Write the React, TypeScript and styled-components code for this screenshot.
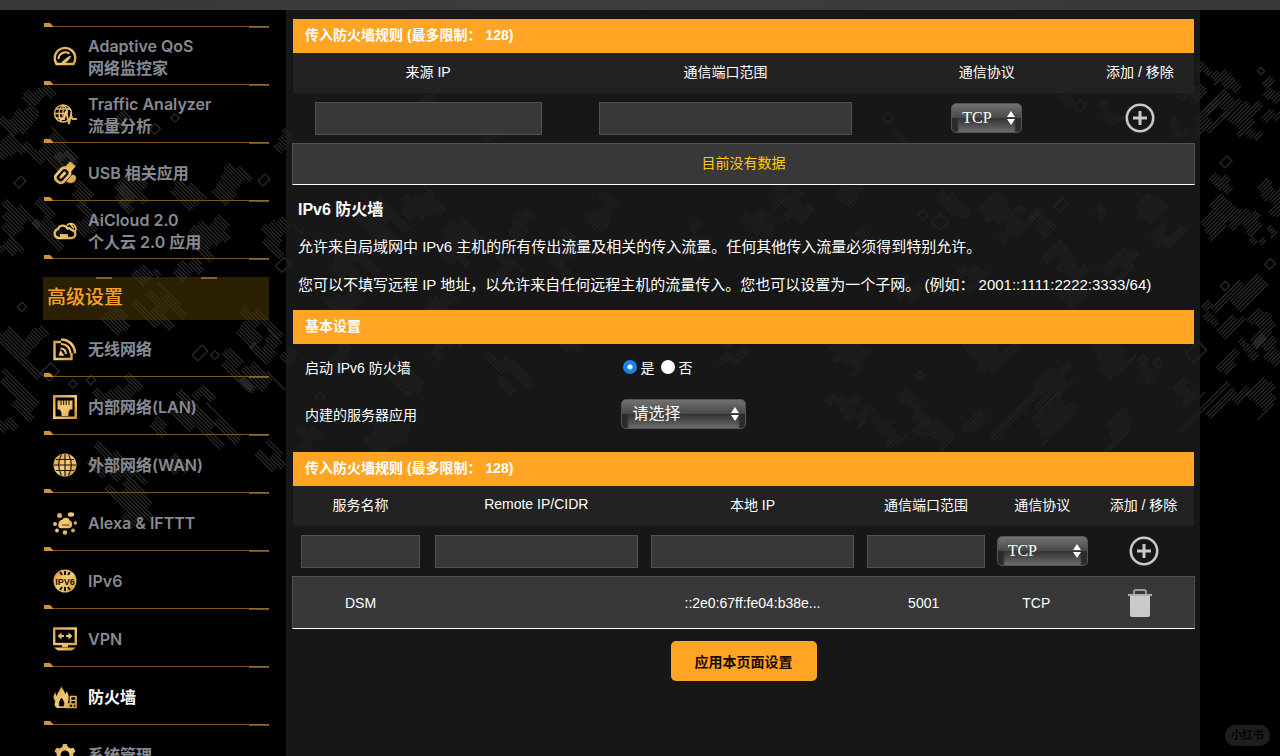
import React from "react";
import styled, { createGlobalStyle } from "styled-components";

const SANS = `"Liberation Sans", "Noto Sans CJK SC", sans-serif`;
const MENU = `Inter, "Noto Sans CJK SC", sans-serif`;
const SERIF = `"Liberation Serif", "Noto Sans CJK SC", serif`;
const ACCENT = "#ffa523";

const GlobalStyle = createGlobalStyle`
  *, *::before, *::after { box-sizing: border-box; }
  body { margin: 0; background: #000; color: #fff; font-family: ${SANS}; font-size: 14px; }
`;

/* ---------- page frame ---------- */

const Page = styled.div`
  position: relative;
  height: 100vh;
  overflow-y: auto;
  scrollbar-width: none;
  display: flex;
  flex-direction: column;
  background: #000;
`;

const TopStrip = styled.div`
  position: relative;
  flex: none;
  height: 10px;
  background: linear-gradient(90deg, #383838, #3e3d3b 50%, #383838);
`;

const Columns = styled.div`
  position: relative;
  flex: 1 0 auto;
  display: flex;
  align-items: stretch;
  height: 0;
  padding: 0 80px 0 43px;
`;

const Sidebar = styled.nav`
  flex: none;
  width: 243px;
  padding: 13px 17px 0 0;
  font-family: ${MENU};
`;

const Content = styled.main`
  flex: 1;
  min-width: 0;
  padding: 9px 5px 24px 6px;
  background: rgba(31, 31, 31, 0.75);
`;

const Backdrop = styled.svg`
  position: absolute;
  inset: 0;
  width: 100%;
  height: 100%;
`;

const Watermark = styled.span`
  position: fixed;
  right: 10px;
  bottom: 10px;
  padding: 0 6px;
  border-radius: 10px;
  background: #1e1e1e;
  color: #050505;
  font: bold 11px/21px ${SANS};
`;

/* ---------- sidebar ---------- */

const MenuItem = styled.a<{ $active?: boolean }>`
  display: flex;
  flex-direction: column;
  height: 58px;
  color: ${(p) => (p.$active ? "#fff" : "#868a92")};
  text-decoration: none;
  font-size: 16px;
  font-weight: 600;
  line-height: 22px;
`;

const MenuBody = styled.span`
  flex: 1;
  display: flex;
  align-items: center;
  gap: 11px;
  padding: 4px 0 0 10px;
  white-space: pre-line;

  svg {
    flex: none;
  }
`;

const RuleSvg = styled.svg`
  display: block;
  flex: none;
  width: 100%;
  height: 5px;
`;

const MenuHeading = styled.h2`
  display: flex;
  align-items: center;
  height: 43px;
  margin: 17px 0 0;
  padding: 0 4px 2px;
  background:
    linear-gradient(#8a6220, #8a6220) 53px 0 / 16px 2px no-repeat,
    linear-gradient(#8a6220, #8a6220) 158px 0 / 16px 2px no-repeat,
    rgba(70, 50, 6, 0.62);
  color: #f9a227;
  font: 500 19px/28px ${SANS};
`;

/* ---------- content ---------- */

const SectionBar = styled.h3`
  height: 34px;
  margin: 0 1px;
  padding: 0 12px;
  background: ${ACCENT};
  color: #fff;
  font: bold 14px/32px ${SANS};
  white-space: pre;
`;

const RuleTable = styled.table`
  width: 100%;
  padding: 0 1px;
  table-layout: fixed;
  border-collapse: separate;
  border-spacing: 0;
  text-align: center;

  th {
    height: 40px;
    padding: 0 0 4px;
    background: #222;
    font-weight: normal;
  }

  td {
    height: 50px;
    padding: 0;
    vertical-align: middle;
  }
`;

const TextBox = styled.input<{ $width: number }>`
  display: block;
  width: ${(p) => p.$width}%;
  height: 33px;
  margin: 0 auto;
  padding: 0 6px;
  border: 1px solid #515151;
  background: #383838;
  color: #fff;
  font: 14px ${SANS};
`;

const DataTable = styled.table<{ $rowHeight: number; $notice?: boolean }>`
  width: 100%;
  table-layout: fixed;
  border-collapse: separate;
  border-spacing: 0;
  border: 1px solid #515151;
  border-bottom-color: #fff;
  background: #383838;
  text-align: center;
  color: ${(p) => (p.$notice ? "#ffcc00" : "#fff")};

  td {
    height: ${(p) => p.$rowHeight}px;
    padding: ${(p) => (p.$notice ? "0 0 4px" : "0")};
    overflow: hidden;
    text-overflow: ellipsis;
    white-space: nowrap;
  }
`;

const IconButton = styled.button`
  display: block;
  width: 30px;
  height: 30px;
  margin: 0 auto;
  padding: 0;
  border: 0;
  background: none;
  cursor: pointer;

  svg {
    display: block;
  }
`;

const SelectBox = styled.span<{ $width: number }>`
  position: relative;
  display: inline-block;
  width: ${(p) => p.$width}px;
  height: 30px;
  vertical-align: middle;

  svg {
    position: absolute;
    top: 8px;
    right: 7px;
    pointer-events: none;
  }
`;

const GlossySelect = styled.select`
  display: block;
  width: 100%;
  height: 30px;
  padding: 0 20px 0 10px;
  appearance: none;
  border: 1px solid #555;
  border-radius: 5px;
  background:
    linear-gradient(#727272, #484848) 0 0 / 100% 14px no-repeat,
    linear-gradient(90deg, #2b2b2b 5px, transparent 7px, transparent calc(100% - 7px), #2b2b2b calc(100% - 5px)) 0 14px / 100% 14px no-repeat,
    linear-gradient(#333, #6a6a6a) 0 14px / 100% 14px no-repeat;
  color: #fff;
  font: 16px/26px ${SERIF};

  option {
    background: #383838;
  }
`;

const Intro = styled.section`
  padding: 15px 6px 14px;

  h2 {
    margin: 0 0 16px;
    font-size: 16px;
    line-height: 20px;
  }

  p {
    margin: 0 0 16px;
    font-size: 15px;
    line-height: 22px;
    white-space: pre-wrap;
  }

  p:last-child {
    margin: 0;
  }
`;

const Settings = styled.div`
  padding: 0 0 14px;
`;

const SettingRow = styled.div`
  display: grid;
  grid-template-columns: 32fr 58fr;
  align-items: center;
  height: 47px;
  padding: 0 0 2px 13px;
`;

const RadioGroup = styled.div`
  display: flex;
  gap: 7px;
  padding: 0 2px;
`;

const RadioLabel = styled.label`
  display: flex;
  align-items: center;
  gap: 3px;
`;

const Radio = styled.input`
  appearance: none;
  width: 14px;
  height: 14px;
  margin: 0;
  border-radius: 50%;
  background: #fff;

  &:checked {
    background: radial-gradient(circle, #fff 2px, #1b82ea 3px);
  }
`;

const Actions = styled.div`
  display: flex;
  justify-content: center;
  padding: 12px 0 0;
`;

const ApplyButton = styled.button`
  height: 40px;
  padding: 0 24px;
  border: 0;
  border-radius: 5px;
  background: ${ACCENT};
  color: #180800;
  font: bold 14px ${SANS};
  cursor: pointer;
`;

/* ---------- camouflage backdrop ---------- */

type Patch = [x: number, y: number, length: number, breadth: number];

const fallingPatches: Patch[] = [
  [42, 95, 18, 24], [20, 118, 26, 34], [6, 145, 26, 24], [50, 148, 36, 36], [66, 165, 28, 20],
  [80, 190, 22, 16], [120, 122, 20, 24], [130, 190, 34, 34], [190, 196, 40, 20], [228, 180, 28, 38],
  [284, 140, 18, 22], [280, 235, 26, 34], [16, 220, 30, 30], [48, 222, 40, 24], [8, 248, 26, 20],
  [85, 220, 30, 24], [130, 200, 22, 16], [214, 236, 28, 42], [190, 270, 18, 26], [148, 276, 18, 20],
  [112, 315, 26, 20], [160, 308, 40, 34], [252, 325, 36, 32], [266, 345, 26, 26], [16, 345, 60, 18],
  [36, 335, 18, 20], [22, 400, 56, 20], [8, 425, 20, 16], [120, 390, 26, 42], [238, 368, 40, 18],
  [204, 395, 18, 16], [260, 382, 36, 26], [160, 425, 20, 14], [198, 422, 50, 24], [228, 430, 60, 9],
  [180, 468, 26, 16], [270, 455, 34, 20], [116, 470, 50, 30], [130, 495, 44, 26], [134, 515, 22, 20],
  [375, 215, 44, 32], [420, 205, 30, 34], [455, 238, 40, 42], [520, 222, 26, 30], [565, 250, 28, 36],
  [350, 262, 40, 34], [500, 272, 24, 34], [604, 212, 24, 36], [345, 300, 28, 30], [440, 300, 24, 30],
  [400, 372, 42, 22], [340, 352, 22, 24], [505, 370, 44, 26], [575, 345, 26, 20], [445, 348, 24, 26],
  [385, 430, 34, 42], [310, 438, 24, 24], [290, 355, 22, 16], [430, 98, 12, 24], [492, 138, 12, 28],
];

const risingPatches: Patch[] = [
  [1210, 72, 12, 26], [1228, 84, 16, 24], [1224, 106, 34, 22], [1206, 122, 34, 20], [1242, 120, 34, 20],
  [1276, 95, 18, 34], [1256, 134, 14, 14], [1272, 118, 24, 14], [1222, 184, 16, 24], [1226, 208, 28, 26],
  [1210, 228, 30, 20], [1246, 226, 30, 24], [1274, 196, 22, 34], [1258, 242, 12, 14], [1272, 232, 12, 10],
  [1240, 297, 40, 24], [1212, 314, 16, 24], [1228, 330, 40, 14], [1260, 326, 30, 26], [1274, 350, 16, 38],
  [1250, 348, 10, 24], [1228, 366, 32, 14], [1216, 396, 70, 4], [1232, 400, 44, 16], [1260, 400, 26, 26],
  [790, 205, 30, 44], [758, 226, 20, 34], [848, 196, 26, 20], [952, 206, 22, 34], [1008, 214, 34, 46],
  [1040, 226, 20, 28], [872, 236, 20, 26], [1155, 204, 36, 24], [1100, 214, 12, 14], [1166, 236, 26, 24],
  [1070, 260, 28, 40], [1120, 268, 44, 22], [975, 272, 28, 24], [906, 292, 20, 28], [1074, 294, 30, 22],
  [986, 354, 36, 42], [850, 356, 26, 38], [1108, 360, 38, 34], [1145, 374, 18, 22], [1050, 388, 46, 28],
  [1022, 408, 70, 6], [850, 408, 24, 44], [886, 432, 18, 34], [916, 408, 16, 40], [934, 434, 30, 34],
  [972, 428, 34, 14], [1046, 424, 50, 26], [1116, 432, 48, 22], [730, 355, 24, 24], [700, 240, 24, 30],
  [1112, 112, 16, 28], [900, 138, 10, 20], [1066, 100, 12, 18], [1195, 92, 24, 18], [1180, 128, 20, 22],
  [1190, 390, 20, 26],
];

const outlines: Patch[] = [
  [175, 118, 6, 6], [155, 129, 8, 7], [20, 182, 10, 7], [264, 180, 10, 7], [22, 307, 7, 6],
  [50, 372, 14, 12], [73, 384, 6, 6], [91, 380, 7, 6], [200, 353, 14, 8], [215, 355, 6, 6],
  [283, 265, 12, 9], [1226, 162, 10, 7], [1261, 71, 5, 5], [1270, 264, 8, 7], [1225, 286, 7, 6],
  [1061, 205, 12, 8], [923, 215, 7, 7], [940, 222, 12, 12], [1143, 360, 7, 7], [1158, 363, 7, 7],
  [920, 375, 6, 6], [1196, 352, 18, 12], [888, 118, 8, 8], [1080, 106, 10, 8], [320, 397, 6, 6],
];

/* Each patch is a stack of parallel strokes in stepped groups, giving a pixelated edge. */
function hatch(patches: Patch[], slope: 1 | -1) {
  let seed = 7;
  const random = () => {
    seed = (seed * 16807) % 2147483647;
    return seed / 2147483647 - 0.5;
  };
  let d = "";
  patches.forEach(([x, y, length, breadth]) => {
    let drift = 0;
    let scale = 1;
    for (let i = 0; i * 2.8 < breadth; i++) {
      if (i % 3 === 0) {
        drift = random() * length * 0.6;
        scale = 0.75 + random() * 0.6;
      }
      const across = (i * 2.8 - breadth / 2) * 0.707;
      const half = (length / 2) * scale * 0.707;
      const cx = x + across + drift * 0.707;
      const cy = y - across * slope + drift * 0.707 * slope;
      d += `M${(cx - half).toFixed(1)} ${(cy - half * slope).toFixed(1)}L${(cx + half).toFixed(1)} ${(cy + half * slope).toFixed(1)}`;
    }
  });
  return d;
}

const fallingPath = hatch(fallingPatches, 1);
const risingPath = hatch(risingPatches, -1);

const Camouflage = () => (
  <Backdrop viewBox="0 0 1280 756" preserveAspectRatio="xMidYMin slice" aria-hidden="true">
    <g fill="none" stroke="#2e2e2e" strokeWidth="1.2">
      <path d={fallingPath} />
      <path d={risingPath} />
      {outlines.map(([x, y, w, h]) => (
        <rect key={`${x}-${y}`} x={x - w / 2} y={y - h / 2} width={w} height={h} transform={`rotate(-45 ${x} ${y})`} />
      ))}
    </g>
  </Backdrop>
);

/* ---------- icons ---------- */

const Rule = () => (
  <RuleSvg viewBox="0 0 226 5" preserveAspectRatio="none" aria-hidden="true">
    <path d="M1 3.5H226" stroke="#7d561f" />
    <path d="M1 0h6l3 3v1H1z" fill="#cf933c" />
    <path d="M206 4h20" stroke="#9a7338" strokeWidth="1.4" />
  </RuleSvg>
);

const icons: Record<string, React.ReactNode> = {
  qos: (
    <>
      <path d="M3.500 19A10.300 10.300 0 1 1 20.500 19Z" strokeWidth="2.400" />
      <path d="M5.500 14a6.800 6.800 0 0 1 11-5.200" strokeWidth="2" />
      <path d="M9 17.500c1-1.500 5.500-5 8.500-6.500-1 3-3 5.500-5.500 6.500z" fill="url(#gold)" strokeWidth="1" />
    </>
  ),
  traffic: (
    <>
      <circle cx="10" cy="10.500" r="8.500" strokeWidth="1.500" />
      <path d="M10 2v12M1.500 10.500H13M3 6h14M3 15h8M10 2C5 5.500 5 14 8.500 18.500M10 2c4 3 4.500 6 4.500 8" strokeWidth="1.300" />
      <path d="M8 16h3l2-8 3 13 2-9 1.500 4H24" strokeWidth="1.900" />
    </>
  ),
  usb: (
    <>
      <g transform="rotate(42 11 12)">
        <rect x="6.500" y="6.500" width="10" height="16" rx="4" strokeWidth="2.800" />
        <path d="M8.500 6V0h6v6z" fill="url(#gold)" strokeWidth="1.500" />
        <path d="M11.500 10.500v8" strokeWidth="2.800" />
      </g>
      <path d="M13 20.500l6-7c4 0 5 2.500 4 5.500s-6 5-10 1.500z" fill="url(#gold)" stroke="#1a1204" strokeWidth="0.600" />
    </>
  ),
  cloud: (
    <>
      <path d="M5.500 19a4.500 4.500 0 0 1-.5-8.800C6 6 12 5 14.500 9.500c1-.5 3-.3 3.800 1.300 5 .7 5.500 7 1 8.200z" strokeWidth="2.300" />
      <path d="M14 6.500c2-3 6-2.500 8 .5 1.500 2.500 1 5-.5 6.500M17 4.500l4 5" strokeWidth="1.600" />
      <path d="M7 16.500h8" strokeWidth="2.800" />
    </>
  ),
  wifi: (
    <>
      <path d="M8 5H1.500v17h17v-6" strokeWidth="2.400" />
      <path d="M8 2.500c8 0 14 6 14 14" strokeWidth="2.600" />
      <path d="M8 7c5.500 0 9.500 4 9.500 9.500M7.500 11.500c3.500 0 5.500 2 5.500 5.500" strokeWidth="2.100" />
      <path d="M6 18.500l1.500-5 3.500 5z" fill="url(#gold)" strokeWidth="0.500" />
    </>
  ),
  lan: (
    <>
      <rect x="1.200" y="1.200" width="21.600" height="21.600" strokeWidth="2.600" />
      <path d="M4.500 5.500h15v9h-2.500l-1.500 3.500v3h-7v-3L7 14.500H4.500z" fill="url(#gold)" stroke="none" />
      <path d="M8 5v5M10.700 5v5M13.300 5v5M16 5v5" stroke="#1a1204" strokeWidth="1" />
    </>
  ),
  wan: (
    <>
      <circle cx="12" cy="12" r="11.500" fill="url(#gold)" stroke="none" />
      <path d="M12 1v22M1 12h22M3 6.500h18M3 17.500h18M8.500 1.500C5 8 5 16 8.500 22.500M15.500 1.500c3.500 6.500 3.500 14.500 0 21" stroke="#1a1204" strokeWidth="1.100" />
    </>
  ),
  alexa: (
    <>
      <path d="M6 14c0-3 2-4.500 3.500-4.500C11 6.500 15.500 7 16 10c3 .5 3.500 6 0 6.500H8C6.500 16.500 6 15.500 6 14z" fill="url(#gold)" strokeWidth="1.500" />
      <path d="M9 14h7" stroke="#8a5f20" strokeWidth="1.500" />
      <g fill="url(#gold)" stroke="none">
        <circle cx="6.500" cy="4.500" r="2.500" />
        <ellipse cx="18" cy="3.500" rx="3.200" ry="2.200" />
        <circle cx="2" cy="13" r="2" />
        <circle cx="22.300" cy="12" r="1.700" />
        <circle cx="4" cy="19.500" r="1.900" />
        <circle cx="20" cy="19.500" r="1.900" />
        <circle cx="12" cy="21.500" r="2.300" />
      </g>
    </>
  ),
  ipv6: (
    <>
      <circle cx="12" cy="12" r="11.500" fill="url(#gold)" stroke="none" />
      <path d="M7 3l2 3M12 2v4M17 3l-2 3M7 21l2-3M12 22v-4M17 21l-2-3" stroke="#1a1204" strokeWidth="2" />
      <text x="12" y="15.500" textAnchor="middle" fontFamily="Liberation Sans, sans-serif" fontWeight="bold" fontSize="9" fill="#1a1204" stroke="none">IPV6</text>
    </>
  ),
  vpn: (
    <>
      <rect x="1.200" y="1.500" width="21.600" height="15.500" strokeWidth="2.400" />
      <path d="M4.500 9L8.500 5.500V8H11v2H8.500v2.500zM19.500 9L15.500 5.500V8H13v2h2.500v2.500z" fill="url(#gold)" stroke="none" />
      <path d="M9 19h6" strokeWidth="2.500" />
      <path d="M1 20.500h22l-4 3H5z" fill="url(#gold)" stroke="none" />
    </>
  ),
  firewall: (
    <>
      <path d="M8 1c1 3 4 5 4 8 1-.5 1.500-1.500 1.500-3 2 3 3 7 1.500 11H5C-1 16 0 10 2.500 7c0 2 .5 3 1.500 4C4 7 8 5 8 1z M3 15h12v8H4c-3-2-3-5-1-8z" fill="url(#gold)" stroke="none" />
      <path d="M8.500 13c2 2.500 3 5 2 8H6.500c-1-3 .5-5 2-8z" fill="#000" stroke="#1a1204" strokeWidth="0.800" />
      <path d="M12 22.500h11v-11h-5.500v4.500M13 19h10M17.500 19v-3.500H23M16 22.500V19M20 22.500V19" strokeWidth="1.700" />
    </>
  ),
  system: (
    <>
      <path d="M10 1h4l.8 3 2.700 1.500 3-.8 2 3.500-2.200 2.200v3.200l2.200 2.200-2 3.500-3-.8-2.700 1.500-.8 3h-4l-.8-3-2.700-1.500-3 .8-2-3.500 2.200-2.200v-3.200L1.500 8.200l2-3.500 3 .8L9.200 4z" fill="url(#gold)" stroke="none" />
      <circle cx="12" cy="12" r="4.500" fill="#000" stroke="none" />
    </>
  ),
};

const MenuIcon = ({ name }: { name: string }) => (
  <svg width="24" height="24" viewBox="0 0 24 24" fill="none" stroke="url(#gold)" aria-hidden="true">
    {icons[name]}
  </svg>
);

const GoldGradient = () => (
  <svg width="0" height="0" style={{ position: "absolute" }} aria-hidden="true">
    <defs>
      <linearGradient id="gold" gradientUnits="userSpaceOnUse" x1="0" y1="0" x2="24" y2="24">
        <stop offset="0" stopColor="#d2973b" />
        <stop offset="0.500" stopColor="#f3cd78" />
        <stop offset="1" stopColor="#cf9136" />
      </linearGradient>
    </defs>
  </svg>
);

const PlusIcon = () => (
  <svg width="30" height="30" viewBox="0 0 30 30" fill="none" stroke="#c9c9c9" aria-hidden="true">
    <circle cx="15" cy="15" r="13.200" strokeWidth="2.600" />
    <path d="M15 8v14M8 15h14" strokeWidth="3" />
  </svg>
);

const TrashIcon = () => (
  <svg width="30" height="30" viewBox="0 0 30 30" fill="none" aria-hidden="true">
    <path d="M9 6V4q0-2 2-2h8q2 0 2 2v2" stroke="#9a9a9a" strokeWidth="2" />
    <path d="M3 7h24" stroke="#b0b0b0" strokeWidth="2" />
    <path d="M5 8h20v19q0 2-2 2H7q-2 0-2-2z" fill="#cacaca" />
  </svg>
);

/* ---------- form parts ---------- */

const Dropdown = ({ label, value, width }: { label: string; value: string; width: number }) => (
  <SelectBox $width={width}>
    <GlossySelect aria-label={label} defaultValue={value}>
      <option>{value}</option>
    </GlossySelect>
    <svg width="8" height="14" viewBox="0 0 8 14" fill="#fff" aria-hidden="true">
      <path d="M4 0l4 6h-8zM4 14l4-6h-8z" />
    </svg>
  </SelectBox>
);

const AddButton = () => (
  <IconButton type="button" aria-label="添加">
    <PlusIcon />
  </IconButton>
);

const Cols = ({ widths }: { widths: number[] }) => (
  <colgroup>
    {widths.map((width, i) => (
      <col key={i} style={{ width: `${width}%` }} />
    ))}
  </colgroup>
);

const HeaderRow = ({ titles }: { titles: string[] }) => (
  <thead>
    <tr>
      {titles.map((title) => (
        <th key={title} scope="col">{title}</th>
      ))}
    </tr>
  </thead>
);

const generalMenu = [
  { icon: "qos", text: "Adaptive QoS\n网络监控家" },
  { icon: "traffic", text: "Traffic Analyzer\n流量分析" },
  { icon: "usb", text: "USB 相关应用" },
  { icon: "cloud", text: "AiCloud 2.0\n个人云 2.0 应用" },
];

const advancedMenu = [
  { icon: "wifi", text: "无线网络" },
  { icon: "lan", text: "内部网络(LAN)" },
  { icon: "wan", text: "外部网络(WAN)" },
  { icon: "alexa", text: "Alexa & IFTTT" },
  { icon: "ipv6", text: "IPv6" },
  { icon: "vpn", text: "VPN" },
  { icon: "firewall", text: "防火墙", active: true },
  { icon: "system", text: "系统管理" },
];

const MenuList = ({ items }: { items: { icon: string; text: string; active?: boolean }[] }) => (
  <>
    {items.map(({ icon, text, active }) => (
      <MenuItem key={icon} href="#" $active={active} aria-current={active ? "page" : undefined}>
        <MenuBody>
          <MenuIcon name={icon} />
          <span>{text}</span>
        </MenuBody>
        <Rule />
      </MenuItem>
    ))}
  </>
);

const RULES_TITLE = "传入防火墙规则 (最多限制： 128)";

export default function App() {
  return (
    <Page>
      <GlobalStyle />
      <GoldGradient />
      <Camouflage />
      <TopStrip />
      <Columns>
        <Sidebar>
          <Rule />
          <MenuList items={generalMenu} />
          <MenuHeading>高级设置</MenuHeading>
          <MenuList items={advancedMenu} />
        </Sidebar>
        <Content>
          <SectionBar>{RULES_TITLE}</SectionBar>
          <RuleTable>
            <Cols widths={[30, 36, 22, 12]} />
            <HeaderRow titles={["来源 IP", "通信端口范围", "通信协议", "添加 / 移除"]} />
            <tbody>
              <tr>
                <td><TextBox $width={84} aria-label="来源 IP" /></td>
                <td><TextBox $width={78} aria-label="通信端口范围" /></td>
                <td><Dropdown label="通信协议" value="TCP" width={71} /></td>
                <td><AddButton /></td>
              </tr>
            </tbody>
          </RuleTable>
          <DataTable $rowHeight={40} $notice>
            <tbody>
              <tr>
                <td>目前没有数据</td>
              </tr>
            </tbody>
          </DataTable>

          <Intro>
            <h2>IPv6 防火墙</h2>
            <p>允许来自局域网中 IPv6 主机的所有传出流量及相关的传入流量。任何其他传入流量必须得到特别允许。</p>
            <p>您可以不填写远程 IP 地址，以允许来自任何远程主机的流量传入。您也可以设置为一个子网。 (例如： 2001::1111:2222:3333/64)</p>
          </Intro>

          <SectionBar>基本设置</SectionBar>
          <Settings>
            <SettingRow>
              <span>启动 IPv6 防火墙</span>
              <RadioGroup role="radiogroup" aria-label="启动 IPv6 防火墙">
                <RadioLabel><Radio type="radio" name="ipv6-firewall" defaultChecked />是</RadioLabel>
                <RadioLabel><Radio type="radio" name="ipv6-firewall" />否</RadioLabel>
              </RadioGroup>
            </SettingRow>
            <SettingRow>
              <span>内建的服务器应用</span>
              <Dropdown label="内建的服务器应用" value="请选择" width={125} />
            </SettingRow>
          </Settings>

          <SectionBar>{RULES_TITLE}</SectionBar>
          <RuleTable>
            <Cols widths={[15, 24, 24, 14.5, 11.3, 11.2]} />
            <HeaderRow titles={["服务名称", "Remote IP/CIDR", "本地 IP", "通信端口范围", "通信协议", "添加 / 移除"]} />
            <tbody>
              <tr>
                <td><TextBox $width={88} aria-label="服务名称" /></td>
                <td><TextBox $width={94} aria-label="Remote IP/CIDR" /></td>
                <td><TextBox $width={94} aria-label="本地 IP" /></td>
                <td><TextBox $width={90} aria-label="通信端口范围" /></td>
                <td><Dropdown label="通信协议" value="TCP" width={91} /></td>
                <td><AddButton /></td>
              </tr>
            </tbody>
          </RuleTable>
          <DataTable $rowHeight={51}>
            <Cols widths={[15, 24, 24, 14, 11, 12]} />
            <tbody>
              <tr>
                <td>DSM</td>
                <td />
                <td>::2e0:67ff:fe04:b38e...</td>
                <td>5001</td>
                <td>TCP</td>
                <td>
                  <IconButton type="button" aria-label="移除">
                    <TrashIcon />
                  </IconButton>
                </td>
              </tr>
            </tbody>
          </DataTable>
          <Actions>
            <ApplyButton type="button">应用本页面设置</ApplyButton>
          </Actions>
        </Content>
      </Columns>
      <Watermark>小红书</Watermark>
    </Page>
  );
}
